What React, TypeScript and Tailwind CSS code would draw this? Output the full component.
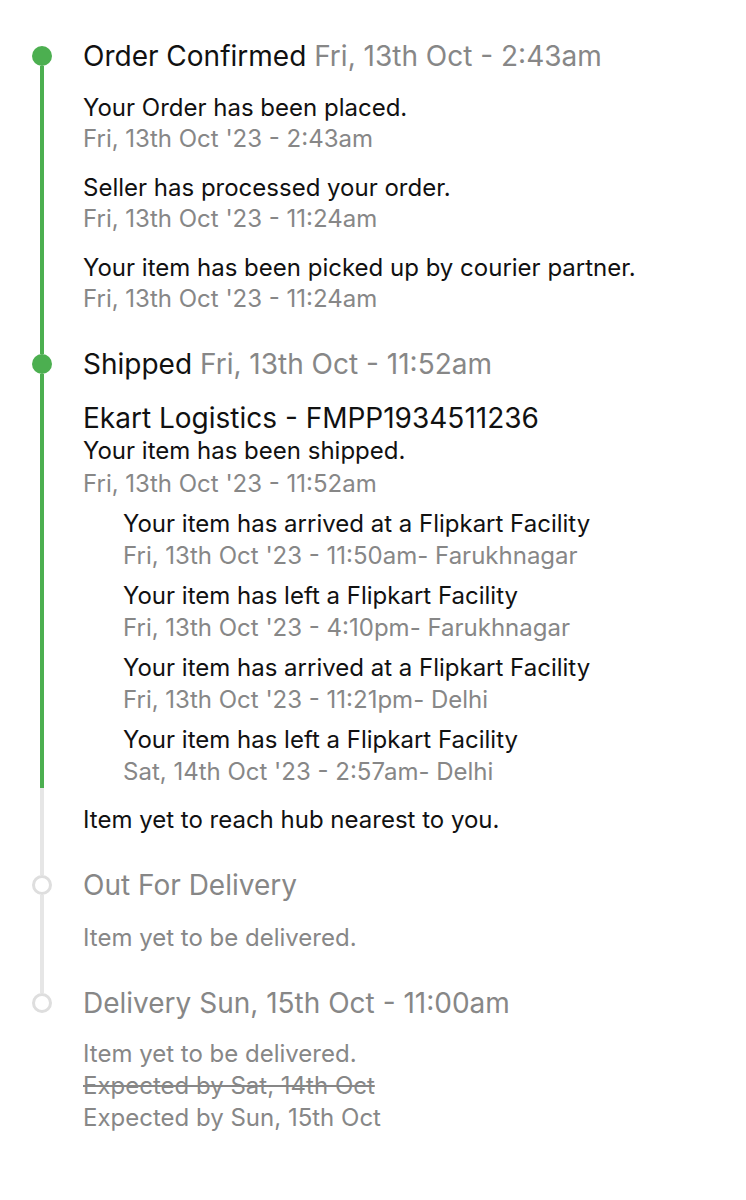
import type { ReactNode } from 'react';

type Line = 'green' | 'gray' | 'none';
type Dot = 'filled' | 'ring';

const lineClass: Record<Line, string> = {
  green: 'bg-[#4caf50]',
  gray: 'bg-[#e6e6e6]',
  none: 'bg-transparent',
};

function Rail({ dot, above = 'none', below = 'none' }: { dot?: Dot; above?: Line; below?: Line }) {
  if (!dot) {
    return (
      <div className="flex justify-center">
        <div className={`w-1 h-full ${lineClass[below]}`} />
      </div>
    );
  }
  return (
    <div className="flex flex-col items-center">
      <div className={`w-1 h-[6px] ${lineClass[above]}`} />
      {dot === 'filled' ? (
        <div className="w-5 h-5 rounded-full bg-[#4caf50] shrink-0" />
      ) : (
        <div className="w-5 h-5 rounded-full border-[3px] border-[#dedede] bg-white shrink-0" />
      )}
      <div className={`w-1 flex-1 ${lineClass[below]}`} />
    </div>
  );
}

function Row({ rail, children }: { rail: ReactNode; children: ReactNode }) {
  return (
    <>
      {rail}
      <div>{children}</div>
    </>
  );
}

function Update({ text, time }: { text: string; time: string }) {
  return (
    <div className="leading-[31px]">
      <div className="text-[#111]">{text}</div>
      <div className="text-[#878787]">{time}</div>
    </div>
  );
}

function Facility({ text, time }: { text: string; time: string }) {
  return (
    <div className="leading-[32px]">
      <div className="text-[#111]">{text}</div>
      <div className="text-[#878787]">{time}</div>
    </div>
  );
}

export default function App() {
  return (
    <div
      className="min-h-[1200px] bg-white pt-[40px] text-[24px]"
      style={{ fontFamily: 'Inter, "Noto Sans", sans-serif' }}
    >
      <div className="grid grid-cols-[83px_1fr]">
        {/* Order Confirmed */}
        <Row rail={<Rail dot="filled" below="green" />}>
          <h3 className="text-[28px] leading-[32px] text-[#111]">
            Order Confirmed <span className="text-[#878787]">Fri, 13th Oct - 2:43am</span>
          </h3>
        </Row>
        <Row rail={<Rail below="green" />}>
          <div className="pt-[20px] pb-[34px] flex flex-col gap-[18px]">
            <Update text="Your Order has been placed." time="Fri, 13th Oct '23 - 2:43am" />
            <Update text="Seller has processed your order." time="Fri, 13th Oct '23 - 11:24am" />
            <Update text="Your item has been picked up by courier partner." time="Fri, 13th Oct '23 - 11:24am" />
          </div>
        </Row>

        {/* Shipped */}
        <Row rail={<Rail dot="filled" above="green" below="green" />}>
          <h3 className="text-[28px] leading-[32px] text-[#111]">
            Shipped <span className="text-[#878787]">Fri, 13th Oct - 11:52am</span>
          </h3>
        </Row>
        <Row rail={<Rail below="green" />}>
          <div className="pt-[21px]">
            <div className="text-[28px] leading-[34px] text-[#111]">Ekart Logistics - FMPP1934511236</div>
            <div className="leading-[32px] text-[#111]">Your item has been shipped.</div>
            <div className="leading-[33px] text-[#878787]">Fri, 13th Oct '23 - 11:52am</div>
            <div className="pl-10 mt-[8px] flex flex-col gap-2">
              <Facility text="Your item has arrived at a Flipkart Facility" time="Fri, 13th Oct '23 - 11:50am- Farukhnagar" />
              <Facility text="Your item has left a Flipkart Facility" time="Fri, 13th Oct '23 - 4:10pm- Farukhnagar" />
              <Facility text="Your item has arrived at a Flipkart Facility" time="Fri, 13th Oct '23 - 11:21pm- Delhi" />
              <Facility text="Your item has left a Flipkart Facility" time="Sat, 14th Oct '23 - 2:57am- Delhi" />
            </div>
          </div>
        </Row>
        <Row rail={<Rail below="gray" />}>
          <div className="pt-[16px] pb-[33px] leading-[32px] text-[#111]">Item yet to reach hub nearest to you.</div>
        </Row>

        {/* Out For Delivery */}
        <Row rail={<Rail dot="ring" above="gray" below="gray" />}>
          <h3 className="text-[28px] leading-[32px] text-[#878787]">Out For Delivery</h3>
        </Row>
        <Row rail={<Rail below="gray" />}>
          <div className="pt-[21px] pb-[33px] leading-[32px] text-[#878787]">Item yet to be delivered.</div>
        </Row>

        {/* Delivery */}
        <Row rail={<Rail dot="ring" above="gray" />}>
          <h3 className="text-[28px] leading-[32px] text-[#878787]">Delivery Sun, 15th Oct - 11:00am</h3>
        </Row>
        <Row rail={<Rail />}>
          <div className="pt-[19px] leading-[32px] text-[#878787]">
            <div>Item yet to be delivered.</div>
            <div className="line-through">Expected by Sat, 14th Oct</div>
            <div>Expected by Sun, 15th Oct</div>
          </div>
        </Row>
      </div>
    </div>
  );
}
